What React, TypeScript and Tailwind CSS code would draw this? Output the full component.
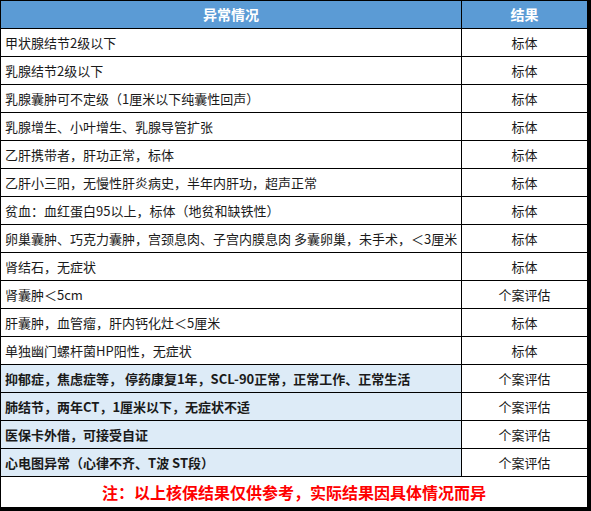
interface Row {
    issue: string;
    result: string;
    strong?: boolean;
}

const rows: Row[] = [
    { issue: '甲状腺结节2级以下', result: '标体' },
    { issue: '乳腺结节2级以下', result: '标体' },
    { issue: '乳腺囊肿可不定级（1厘米以下纯囊性回声）', result: '标体' },
    { issue: '乳腺增生、小叶增生、乳腺导管扩张', result: '标体' },
    { issue: '乙肝携带者，肝功正常，标体', result: '标体' },
    { issue: '乙肝小三阳，无慢性肝炎病史，半年内肝功，超声正常', result: '标体' },
    { issue: '贫血：血红蛋白95以上，标体（地贫和缺铁性）', result: '标体' },
    { issue: '卵巢囊肿、巧克力囊肿，宫颈息肉、子宫内膜息肉 多囊卵巢，未手术，＜3厘米', result: '标体' },
    { issue: '肾结石，无症状', result: '标体' },
    { issue: '肾囊肿＜5cm', result: '个案评估' },
    { issue: '肝囊肿，血管瘤，肝内钙化灶＜5厘米', result: '标体' },
    { issue: '单独幽门螺杆菌HP阳性，无症状', result: '标体' },
    { issue: '抑郁症，焦虑症等， 停药康复1年，SCL-90正常，正常工作、正常生活', result: '个案评估', strong: true },
    { issue: '肺结节，两年CT，1厘米以下，无症状不适', result: '个案评估', strong: true },
    { issue: '医保卡外借，可接受自证', result: '个案评估', strong: true },
    { issue: '心电图异常（心律不齐、T波 ST段）', result: '个案评估', strong: true },
];

export default function App() {
    return (
        <div
            className="w-[591px] h-[511px] bg-white border-l border-t border-black border-r-4 border-b-4 flex flex-col text-[#1a1a1a]"
            style={{ fontFamily: '"Noto Sans CJK SC", "Noto Sans", sans-serif' }}
        >
            <div className="flex h-[28px] border-b border-black bg-[#5b9bd5] text-white font-bold text-[14px]">
                <div className="w-[461px] border-r border-black flex items-center justify-center">异常情况</div>
                <div className="flex-1 flex items-center justify-center">结果</div>
            </div>

            {rows.map((r, i) => (
                <div key={i} className="flex h-[28px] border-b border-black text-[13px]">
                    <div
                        className={`w-[461px] border-r border-black flex items-center pl-[4px] whitespace-nowrap ${r.strong ? 'bg-[#ddebf7] font-bold' : ''}`}
                    >
                        {r.issue}
                    </div>
                    <div className="flex-1 flex items-center justify-center">{r.result}</div>
                </div>
            ))}

            <div className="flex-1 flex items-center justify-center text-[16px] font-bold text-[#ff0000]">
                注：以上核保结果仅供参考，实际结果因具体情况而异
            </div>
        </div>
    );
}
